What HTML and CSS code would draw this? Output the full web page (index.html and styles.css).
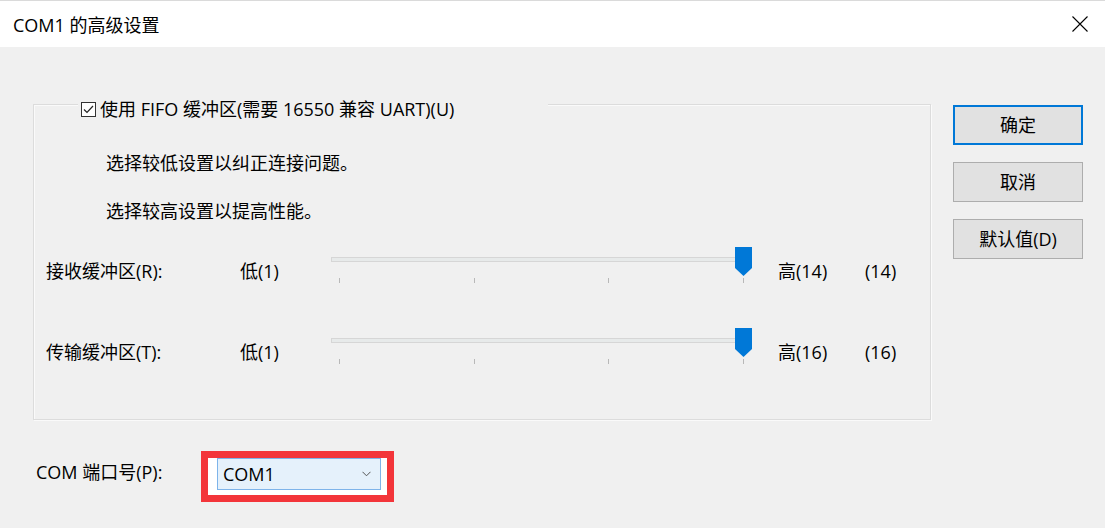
FILE: index.html
```html
<!DOCTYPE html>
<html lang="zh-CN">
<head>
<meta charset="utf-8">
<title>COM1 的高级设置</title>
<link rel="stylesheet" href="styles.css">
</head>
<body>
<div class="titlebar">
  <span class="title">COM1 的高级设置</span>
  <svg class="close" width="16" height="16" viewBox="0 0 16 16"><path d="M0.5 0.5 L15.5 15.5 M15.5 0.5 L0.5 15.5" stroke="#000" stroke-width="1.1" fill="none"/></svg>
</div>
<div class="content">
  <div class="main">
    <div class="group">
      <div class="legend">
        <span class="checkbox"><svg width="13" height="13" viewBox="0 0 13 13"><path d="M2 6.5 L5 9.5 L11 3" stroke="#222" stroke-width="1.2" fill="none"/></svg></span>
        <span>使用 FIFO 缓冲区(需要 16550 兼容 UART)(U)</span>
      </div>
      <p class="hint first">选择较低设置以纠正连接问题。</p>
      <p class="hint second">选择较高设置以提高性能。</p>
      <div class="row">
        <span class="lbl">接收缓冲区(R):</span>
        <span class="low">低(1)</span>
        <div class="slider">
          <div class="track"></div>
          <div class="ticks"><i></i><i></i><i></i><i></i></div>
          <svg class="thumb" width="17" height="29" viewBox="0 0 17 29"><polygon points="0,0 17,0 17,21 8.5,29 0,21" fill="#0078d7"/></svg>
        </div>
        <span class="high">高(14)</span>
        <span class="val">(14)</span>
      </div>
      <div class="row row2">
        <span class="lbl">传输缓冲区(T):</span>
        <span class="low">低(1)</span>
        <div class="slider">
          <div class="track"></div>
          <div class="ticks"><i></i><i></i><i></i><i></i></div>
          <svg class="thumb" width="17" height="29" viewBox="0 0 17 29"><polygon points="0,0 17,0 17,21 8.5,29 0,21" fill="#0078d7"/></svg>
        </div>
        <span class="high">高(16)</span>
        <span class="val">(16)</span>
      </div>
    </div>
    <div class="port">
      <span class="port-label">COM 端口号(P):</span>
      <div class="highlight">
        <div class="select">
          <span>COM1</span>
          <svg width="9" height="6" viewBox="0 0 9 6"><path d="M0.5 0.8 L4.5 4.8 L8.5 0.8" stroke="#555" stroke-width="1" fill="none"/></svg>
        </div>
      </div>
    </div>
  </div>
  <div class="buttons">
    <button class="btn default">确定</button>
    <button class="btn">取消</button>
    <button class="btn">默认值(D)</button>
  </div>
</div>
</body>
</html>
```

FILE: styles.css
```css
html, body {
  margin: 0;
  padding: 0;
}
body {
  width: 1105px;
  height: 528px;
  overflow: hidden;
  background: #f0f0f0;
  font-family: "Open Sans", "Noto Sans CJK SC", sans-serif;
  font-size: 18px;
  color: #000;
}
.titlebar {
  height: 47px;
  box-sizing: border-box;
  border-top: 1px solid #dadada;
  background: #fff;
  display: flex;
  align-items: center;
  justify-content: space-between;
  padding: 0 17px 0 13px;
}
.title {
  line-height: 22px;
  margin-top: 1px;
}
.close {
  display: block;
}
.content {
  display: flex;
  padding-left: 33px;
}
.main {
  width: 898px;
  padding-top: 57px;
}
.group {
  height: 316px;
  box-sizing: border-box;
  border: 1px solid #dcdcdc;
  box-shadow: inset 1px 1px #fafafa, 1px 1px #fafafa;
}
.legend {
  display: flex;
  align-items: center;
  width: 470px;
  height: 22px;
  line-height: 22px;
  margin: -7px 0 0 44px;
  background: #f0f0f0;
}
.checkbox {
  width: 15px;
  height: 15px;
  box-sizing: border-box;
  border: 1px solid #333;
  background: #fff;
  margin: 1px 4px 0 3px;
  display: flex;
  align-items: center;
  justify-content: center;
}
.checkbox svg {
  display: block;
}
.hint {
  margin: 0 0 0 72px;
  line-height: 22px;
}
.hint.first {
  margin-top: 32px;
}
.hint.second {
  margin-top: 26px;
}
.row {
  display: flex;
  height: 37px;
  margin-top: 25px;
}
.row.row2 {
  margin-top: 44px;
}
.row span {
  line-height: 22px;
  margin-top: 13px;
  white-space: nowrap;
}
.lbl {
  width: 194px;
  margin-left: 12px;
}
.low {
  width: 91px;
}
.slider {
  position: relative;
  width: 420px;
  height: 37px;
  margin-right: 27px;
}
.track {
  margin-top: 10px;
  height: 5px;
  box-sizing: border-box;
  border: 1px solid #d6d6d6;
  background: #e7eaea;
}
.ticks {
  display: flex;
  justify-content: space-between;
  padding: 0 7px 0 8px;
  margin-top: 16px;
}
.ticks i {
  display: block;
  width: 1px;
  height: 5px;
  background: #b8b8b8;
}
.thumb {
  position: absolute;
  left: 404px;
  top: 0;
  display: block;
}
.high {
  width: 87px;
}
.port {
  display: flex;
  margin-top: 31px;
}
.port-label {
  width: 165px;
  padding-left: 3px;
  margin-top: 10px;
  line-height: 22px;
  white-space: nowrap;
}
.highlight {
  border: 7px solid #f3353a;
  background: #fff;
  width: 170px;
  height: 37px;
  padding-left: 9px;
}
.select {
  width: 164px;
  height: 32px;
  box-sizing: border-box;
  border: 1px solid #7eb4ea;
  background: #e5f1fb;
  display: flex;
  align-items: center;
  justify-content: space-between;
  padding: 0 9px 0 5px;
  line-height: 22px;
}
.select svg {
  display: block;
}
.buttons {
  margin-left: 22px;
  padding-top: 58px;
  display: flex;
  flex-direction: column;
  gap: 17px;
}
.btn {
  width: 130px;
  height: 40px;
  box-sizing: border-box;
  border: 1px solid #adadad;
  background: #e1e1e1;
  font: inherit;
  color: #000;
  padding: 0;
  line-height: 22px;
  display: flex;
  align-items: center;
  justify-content: center;
}
.btn.default {
  border: 2px solid #0078d7;
}
```
